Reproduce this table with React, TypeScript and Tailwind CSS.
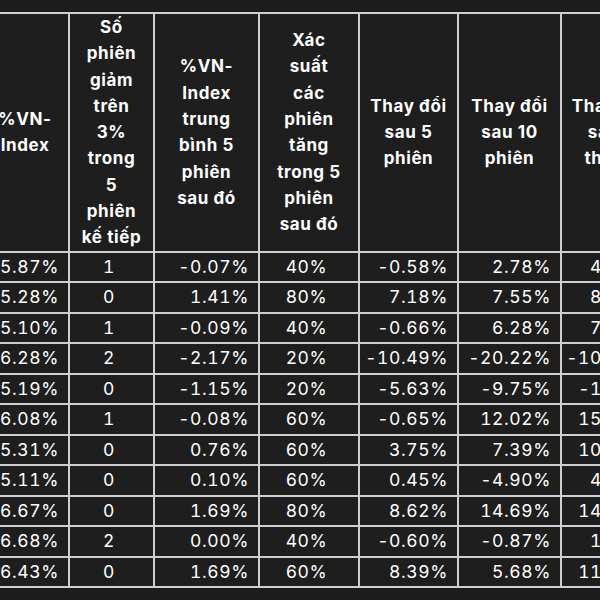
import React from 'react'

type Row = string[]

const headers: string[][] = [
  ['%VN-', 'Index'],
  ['Số', 'phiên', 'giảm', 'trên', '3%', 'trong', '5', 'phiên', 'kế tiếp'],
  ['%VN-', 'Index', 'trung', 'bình 5', 'phiên', 'sau đó'],
  ['Xác', 'suất', 'các', 'phiên', 'tăng', 'trong 5', 'phiên', 'sau đó'],
  ['Thay đổi', 'sau 5', 'phiên'],
  ['Thay đổi', 'sau 10', 'phiên'],
  ['Thay đổi', 'sau 1', 'tháng'],
]

const rows: Row[] = [
  ['-5.87%', '1', '-0.07%', '40%', '-0.58%', '2.78%', '4.12%'],
  ['-5.28%', '0', '1.41%', '80%', '7.18%', '7.55%', '8.04%'],
  ['-5.10%', '1', '-0.09%', '40%', '-0.66%', '6.28%', '7.31%'],
  ['-6.28%', '2', '-2.17%', '20%', '-10.49%', '-20.22%', '-10.86%'],
  ['-5.19%', '0', '-1.15%', '20%', '-5.63%', '-9.75%', '-1.42%'],
  ['-6.08%', '1', '-0.08%', '60%', '-0.65%', '12.02%', '15.37%'],
  ['-5.31%', '0', '0.76%', '60%', '3.75%', '7.39%', '10.21%'],
  ['-5.11%', '0', '0.10%', '60%', '0.45%', '-4.90%', '4.56%'],
  ['-6.67%', '0', '1.69%', '80%', '8.62%', '14.69%', '14.83%'],
  ['-6.68%', '2', '0.00%', '40%', '-0.60%', '-0.87%', '1.95%'],
  ['-6.43%', '0', '1.69%', '60%', '8.39%', '5.68%', '11.24%'],
]

const widths = ['w-[88px]', 'w-[85px]', 'w-[105px]', 'w-[100px]', 'w-[99px]', 'w-[103px]', 'w-[98px]']
const align = ['text-right', 'text-center', 'text-right', 'text-center', 'text-right', 'text-right', 'text-right']

const App: React.FC = () => {
  return (
    <div
      className="w-[600px] h-[600px] overflow-hidden bg-[#1c1c1c] pt-[12px] text-white"
      style={{ fontFamily: 'Inter, "Noto Sans", "DejaVu Sans", sans-serif' }}
    >
      <table className="ml-[-20px] border-collapse table-fixed w-[678px]">
        <colgroup>
          {widths.map((w, i) => (
            <col key={i} className={w} />
          ))}
        </colgroup>
        <thead>
          <tr>
            {headers.map((lines, i) => (
              <th
                key={i}
                className="border-2 border-[#cfcfcf] bg-[#1e1e1e] px-1 py-0 text-center align-middle text-[17px] font-bold leading-[26.3px] tracking-[0.6px]"
              >
                {lines.map((l, j) => (
                  <div key={j} className="whitespace-nowrap">
                    {l}
                  </div>
                ))}
              </th>
            ))}
          </tr>
        </thead>
        <tbody>
          {rows.map((r, i) => (
            <tr key={i}>
              {r.map((v, j) => (
                <td
                  key={j}
                  className={`border-2 border-[#cfcfcf] bg-[#1e1e1e] pl-1 pr-[9px] py-0 text-[17.5px] leading-[28.5px] tracking-[0.6px] tabular-nums whitespace-nowrap ${align[j]}`}
                >
                  {v}
                </td>
              ))}
            </tr>
          ))}
        </tbody>
      </table>
    </div>
  )
}

export default App
